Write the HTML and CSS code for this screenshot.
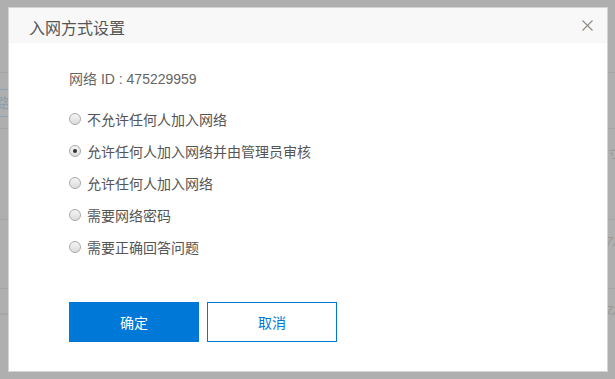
FILE: index.html
```html
<!DOCTYPE html>
<html lang="zh-CN">
<head>
<meta charset="utf-8">
<title>入网方式设置</title>
<link rel="stylesheet" href="styles.css">
</head>
<body>
<div class="backdrop">
  <div class="bg-row r1"></div>
  <div class="bg-row r2"><span class="bg-tab">路</span></div>
  <div class="bg-row r3"><span class="bg-right">寸</span></div>
  <div class="bg-row r4"><span class="bg-right">72</span></div>
  <div class="bg-row r5"><span class="bg-right">72</span></div>
  <div class="bg-row r6"></div>
</div>
<div class="modal">
  <div class="modal-header">
    <span class="modal-title">入网方式设置</span>
    <span class="modal-close">
      <svg width="11" height="11" viewBox="0 0 11 11"><path d="M0.5 0.5L10.5 10.5M10.5 0.5L0.5 10.5" stroke="#8f8a84" stroke-width="1.1" fill="none"/></svg>
    </span>
  </div>
  <div class="modal-body">
    <div class="net-id">网络 ID : 475229959</div>
    <div class="options">
      <label class="option"><span class="radio"></span>不允许任何人加入网络</label>
      <label class="option"><span class="radio checked"></span>允许任何人加入网络并由管理员审核</label>
      <label class="option"><span class="radio"></span>允许任何人加入网络</label>
      <label class="option"><span class="radio"></span>需要网络密码</label>
      <label class="option"><span class="radio"></span>需要正确回答问题</label>
    </div>
    <div class="actions">
      <button class="btn btn-primary">确定</button>
      <button class="btn btn-default">取消</button>
    </div>
  </div>
</div>
</body>
</html>
```
FILE: styles.css
```css
html, body {
  margin: 0;
  padding: 0;
}
body {
  width: 615px;
  height: 379px;
  overflow: hidden;
  background: #afafaf;
  font-family: "Liberation Sans", "Noto Sans CJK SC", sans-serif;
}
.backdrop {
  display: flex;
  flex-direction: column;
}
.bg-row {
  border-bottom: 1px solid #a6a6a6;
  position: relative;
}
.r1 { height: 72px; }
.r2 { height: 55px; }
.r3 { height: 90px; }
.r4 { height: 68px; }
.r5 { height: 24px; }
.bg-tab {
  display: block;
  width: 8px;
  overflow: hidden;
  margin-top: 16px;
  height: 26px;
  line-height: 26px;
  border-top: 1px solid #8aa3bb;
  border-bottom: 1px solid #8aa3bb;
  color: #8d9cad;
  font-size: 14px;
  text-indent: -4px;
}
.bg-right {
  display: block;
  text-align: right;
  margin-right: -5px;
  margin-top: 14px;
  color: #999;
  font-size: 13px;
  font-style: italic;
}
.modal {
  position: fixed;
  top: 7px;
  left: 8px;
  width: 600px;
  height: 365px;
  box-sizing: border-box;
  background: #fff;
  border: 1px solid #d4d4d4;
  display: flex;
  flex-direction: column;
}
.modal-header {
  height: 35px;
  background: #f8f8f8;
  display: flex;
  align-items: center;
  justify-content: space-between;
  padding: 0 14px 0 20px;
}
.modal-title {
  font-size: 16px;
  color: #555;
  margin-top: 2px;
}
.modal-close {
  display: flex;
  margin-top: -1px;
}
.modal-body {
  padding: 27px 0 0 60px;
  color: #666;
  font-size: 14px;
}
.net-id {
  height: 18px;
  line-height: 18px;
}
.options {
  margin-top: 15px;
  display: flex;
  flex-direction: column;
}
.option {
  height: 32px;
  display: flex;
  align-items: center;
  color: #555;
}
.radio {
  width: 10px;
  height: 10px;
  border: 1px solid #a9a9a9;
  border-radius: 50%;
  background: linear-gradient(#f4f4f4, #dcdcdc);
  margin-right: 6px;
  display: flex;
  align-items: center;
  justify-content: center;
  flex: none;
}
.radio.checked::after {
  content: "";
  width: 4px;
  height: 4px;
  border-radius: 50%;
  background: #333;
}
.actions {
  display: flex;
  gap: 8px;
  margin-top: 39px;
}
.btn {
  width: 130px;
  height: 40px;
  box-sizing: border-box;
  font-family: inherit;
  font-size: 14px;
  cursor: pointer;
  padding: 0;
}
.btn-primary {
  background: #0078d7;
  border: 1px solid #0078d7;
  color: #fff;
}
.btn-default {
  background: #fff;
  border: 1px solid #0078d7;
  color: #0078d7;
}
```
